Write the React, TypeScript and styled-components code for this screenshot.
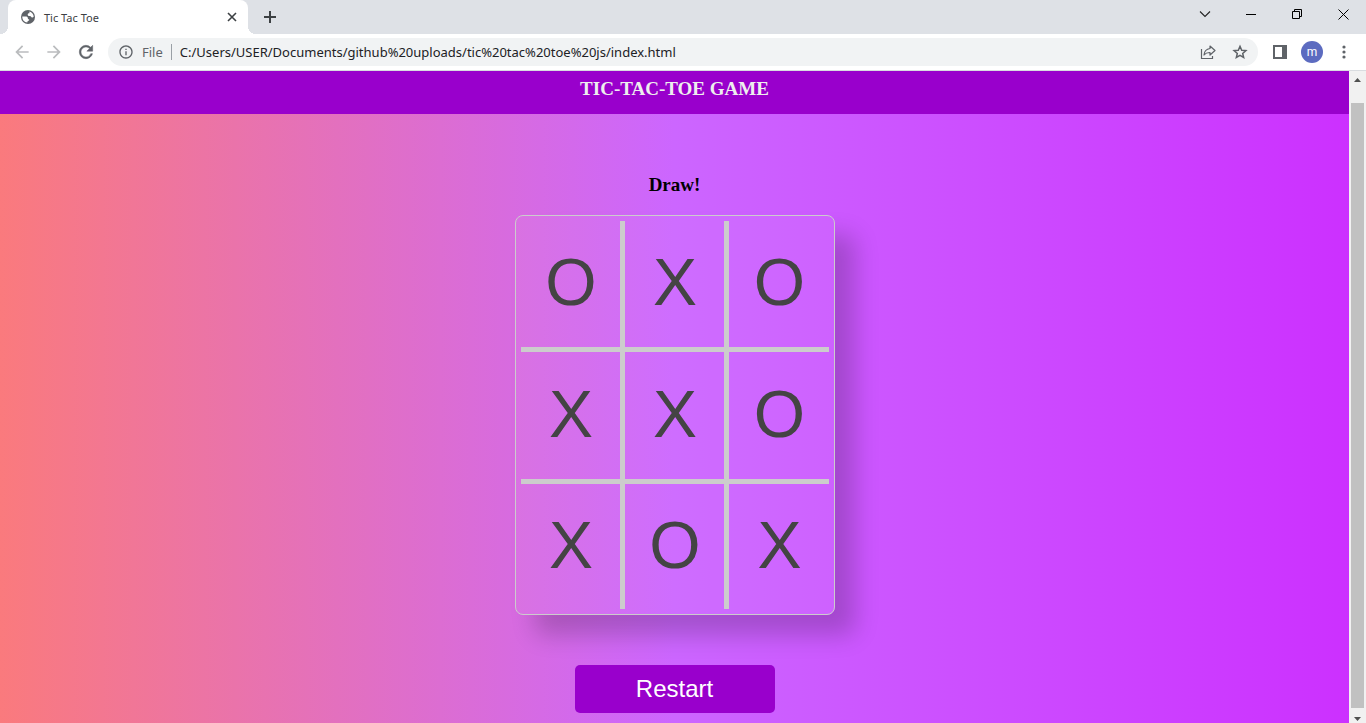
import React from "react";
import styled, { createGlobalStyle } from "styled-components";
import { MdArrowBack, MdArrowForward, MdInfoOutline } from "react-icons/md";

const GlobalStyle = createGlobalStyle`
  * { box-sizing: border-box; }
  body { margin: 0; overflow: hidden; }
  button { border: 0; padding: 0; margin: 0; background: none; color: inherit; }
`;

const sans = `"Noto Sans", "Open Sans", sans-serif`;

const Browser = styled.div`
  display: flex;
  flex-direction: column;
  height: 100vh;
  font-family: ${sans};
`;

const TabStrip = styled.header`
  display: flex;
  align-items: flex-end;
  height: 34px;
  flex: none;
  padding-left: 8px;
  background: #dee1e6;
`;

const Tab = styled.div`
  position: relative;
  display: flex;
  align-items: center;
  gap: 8px;
  width: 240px;
  height: 34px;
  padding: 0 8px 0 12px;
  border-radius: 8px 8px 0 0;
  background: #fff;
  color: #3c4043;
  font-size: 11px;

  &::before,
  &::after {
    content: "";
    position: absolute;
    bottom: 0;
    width: 8px;
    height: 8px;
  }
  &::before {
    left: -8px;
    background: radial-gradient(circle at 0 0, #dee1e6 8px, #fff 8px);
  }
  &::after {
    right: -8px;
    background: radial-gradient(circle at 100% 0, #dee1e6 8px, #fff 8px);
  }
`;

const TabTitle = styled.span`
  flex: 1;
`;

const IconButton = styled.button<{ $w: number; $color?: string }>`
  display: flex;
  align-items: center;
  justify-content: center;
  flex: none;
  width: ${(p) => p.$w}px;
  height: 28px;
  color: ${(p) => p.$color ?? "#5f6368"};
`;

const TabButton = styled(IconButton)`
  height: 34px;
`;

const WindowControls = styled.div`
  display: flex;
  align-self: flex-start;
  margin-left: auto;
`;

const Toolbar = styled.nav`
  display: flex;
  align-items: center;
  flex: none;
  height: 37px;
  padding: 0 6px;
  border-bottom: 1px solid #d9dce0;
  background: #fff;
`;

const AddressBar = styled.form`
  display: flex;
  align-items: center;
  flex: 1;
  height: 28px;
  margin: 0 6px;
  padding: 0 2px 0 10px;
  border-radius: 14px;
  background: #f1f3f4;
  color: #5f6368;
  font-size: 13px;
`;

const Scheme = styled.label`
  margin: 0 8px;
`;

const Divider = styled.span`
  width: 1px;
  height: 16px;
  background: #9aa0a6;
`;

const Url = styled.input`
  flex: 1;
  min-width: 0;
  padding: 0 8px;
  border: 0;
  outline: 0;
  background: none;
  color: #202124;
  font-family: ${sans};
  font-size: 13px;
`;

const Avatar = styled.button`
  width: 22px;
  height: 22px;
  flex: none;
  margin: 0 5px;
  border-radius: 50%;
  background: #5c6bc0;
  color: #fff;
  font: 12px/20px Roboto, sans-serif;
`;

const Viewport = styled.div`
  display: flex;
  flex: 1;
  min-height: 0;
`;

const Page = styled.div`
  display: flex;
  flex-direction: column;
  flex: 1;
  overflow: hidden;
  font-family: "Liberation Serif", serif;
`;

const Banner = styled.header`
  flex: none;
  height: 43px;
  background: #9900cc;
  color: #eee;
  text-align: center;
`;

const Title = styled.h1`
  margin: 0;
  font-size: 19px;
  line-height: 36px;
`;

const Game = styled.main`
  display: flex;
  flex-direction: column;
  align-items: center;
  flex: 1;
  padding-top: 60px;
  background: linear-gradient(to right, #fa7a7d, #cc66ff 50%, #cc30ff);
`;

const Status = styled.h2`
  margin: 0 0 19px;
  font-size: 19px;
  line-height: 22px;
`;

const Board = styled.section`
  display: grid;
  flex: none;
  grid-template: 131px 132px 1fr / 104px 104px 1fr;
  width: 320px;
  height: 400px;
  padding: 5px;
  border: 1px solid #ccc;
  border-radius: 8px;
  background: rgba(255, 255, 255, 0.05);
  box-shadow: 20px 20px 24px rgba(0, 0, 0, 0.2);
`;

const Cell = styled.button`
  padding: 0 0 4px 2px;
  border: 0 solid #ccc;
  color: #444;
  font: 66px/74px "Liberation Sans", Arial, sans-serif;

  &:not(:nth-child(3n)) { border-right-width: 5px; }
  &:nth-child(-n + 6) { border-bottom-width: 5px; }
`;

const Restart = styled.button`
  flex: none;
  width: 200px;
  height: 48px;
  margin-top: 50px;
  border-radius: 5px;
  background: #9900cc;
  color: #fff;
  font: 24px/28px "Liberation Sans", Arial, sans-serif;
`;

const ScrollBar = styled.div`
  display: flex;
  flex-direction: column;
  flex: none;
  width: 17px;
  background: #f1f1f1;
`;

const ScrollArrow = styled.button<{ $h: number; $top?: number }>`
  display: flex;
  align-items: center;
  justify-content: center;
  flex: none;
  height: ${(p) => p.$h}px;
  padding-top: ${(p) => p.$top ?? 0}px;
`;

const Thumb = styled.div`
  flex: 1;
  margin: 15px 2px 0;
  background: #c1c1c1;
`;

const marks = ["O", "X", "O", "X", "X", "O", "X", "O", "X"];

export default function App() {
  return (
    <Browser>
      <GlobalStyle />
      <TabStrip>
        <Tab>
          <svg width="16" height="16" viewBox="0 0 16 16" aria-hidden="true">
            <circle cx="8" cy="8" r="7" fill="#5f6368" />
            <path d="M2.3 7.600h3.200c1.500 0 2.400.600 2.400 1.800 0 .600.500.800 1.200.800v1.300c-1.200.200-1.800.900-1.800 2.100C4.200 13.300 2.200 11 2.300 7.600z" fill="#fff" />
            <path d="M9.400 2.500c2.500.700 4.200 2.700 4.300 5.200-.800.900-1.700.900-2.400.200-.300-.500-.800-.800-1.600-.800-1.200 0-2-.600-2-1.600s.700-1.300 1.700-1.300z" fill="#fff" />
          </svg>
          <TabTitle>Tic Tac Toe</TabTitle>
          <IconButton $w={16} $color="#3c4043" aria-label="Close tab">
            <svg width="10" height="10" viewBox="0 0 10 10" stroke="currentColor" strokeWidth="1.6">
              <path d="M1 1l8 8M9 1L1 9" />
            </svg>
          </IconButton>
        </Tab>
        <TabButton $w={44} $color="#3c4043" aria-label="New tab">
          <svg width="12" height="12" viewBox="0 0 12 12" stroke="currentColor" strokeWidth="2">
            <path d="M6 0v12M0 6h12" />
          </svg>
        </TabButton>
        <WindowControls>
          <IconButton $w={46} $color="#222" aria-label="Search tabs">
            <svg width="12" height="8" viewBox="0 0 12 8" fill="none" stroke="currentColor" strokeWidth="1.1">
              <path d="M1 1.500l5 5 5-5" />
            </svg>
          </IconButton>
          <IconButton $w={46} $color="#000" aria-label="Minimize">
            <svg width="10" height="10" viewBox="0 0 10 10"><path d="M0 5h10v1H0z" /></svg>
          </IconButton>
          <IconButton $w={46} $color="#000" aria-label="Restore">
            <svg width="10" height="10" viewBox="0 0 10 10" fill="none" stroke="currentColor">
              <path d="M.5 2.500h7v7h-7zM2.500 2.500v-2h7v7h-2" />
            </svg>
          </IconButton>
          <IconButton $w={46} $color="#000" aria-label="Close">
            <svg width="11" height="11" viewBox="0 0 11 11" stroke="currentColor">
              <path d="M.5.5l10 10M10.500.5l-10 10" />
            </svg>
          </IconButton>
        </WindowControls>
      </TabStrip>
      <Toolbar>
        <IconButton $w={32} $color="#babcbe" aria-label="Back"><MdArrowBack size={20} /></IconButton>
        <IconButton $w={32} $color="#babcbe" aria-label="Forward"><MdArrowForward size={20} /></IconButton>
        <IconButton $w={32} aria-label="Reload">
          <svg width="20" height="20" viewBox="0 0 24 24" fill="currentColor" stroke="currentColor" strokeWidth="0.600">
            <path d="M17.650 6.350A7.958 7.958 0 0 0 12 4c-4.420 0-7.990 3.580-7.990 8s3.570 8 7.990 8c3.730 0 6.840-2.550 7.730-6h-2.080A5.990 5.990 0 0 1 12 18c-3.310 0-6-2.690-6-6s2.690-6 6-6c1.660 0 3.140.690 4.220 1.780L13 11h7V4l-2.350 2.350z" />
          </svg>
        </IconButton>
        <AddressBar>
          <MdInfoOutline size={16} />
          <Scheme htmlFor="url">File</Scheme>
          <Divider />
          <Url id="url" defaultValue="C:/Users/USER/Documents/github%20uploads/tic%20tac%20toe%20js/index.html" />
          <IconButton $w={32} type="button" aria-label="Share">
            <svg width="16" height="16" viewBox="0 0 16 16" fill="none" stroke="currentColor" strokeWidth="1.200">
              <path d="M1.500 5v9.500h11V12" />
              <path d="M10 2l5 4.500-5 4.500V8.500C7.200 8.400 5.300 9.300 4 11c.3-3.500 2.300-6 6-6.500z" strokeLinejoin="round" />
            </svg>
          </IconButton>
          <IconButton $w={32} type="button" aria-label="Bookmark">
            <svg width="16" height="16" viewBox="0 0 16 16" fill="none" stroke="currentColor" strokeWidth="1.500">
              <path d="M8 2.300l1.700 3.900 4.200.400-3.200 2.800.950 4.100L8 11.300l-3.650 2.200.950-4.100L2.100 6.600l4.200-.400z" />
            </svg>
          </IconButton>
        </AddressBar>
        <IconButton $w={32} aria-label="Side panel">
          <svg width="14" height="14" viewBox="0 0 14 14">
            <path fillRule="evenodd" fill="currentColor" d="M0 0h14v14H0zM2 2v10h7V2z" />
          </svg>
        </IconButton>
        <Avatar aria-label="Profile">m</Avatar>
        <IconButton $w={32} aria-label="Menu">
          <svg width="4" height="14" viewBox="0 0 4 14" fill="currentColor">
            <circle cx="2" cy="2" r="1.600" /><circle cx="2" cy="7" r="1.600" /><circle cx="2" cy="12" r="1.600" />
          </svg>
        </IconButton>
      </Toolbar>
      <Viewport>
        <Page>
          <Banner><Title>TIC-TAC-TOE GAME</Title></Banner>
          <Game>
            <Status>Draw!</Status>
            <Board>
              {marks.map((mark, i) => <Cell key={i}>{mark}</Cell>)}
            </Board>
            <Restart>Restart</Restart>
          </Game>
        </Page>
        <ScrollBar>
          <ScrollArrow $h={17} aria-label="Scroll up">
            <svg width="7" height="4" viewBox="0 0 7 4"><path d="M0 4l3.500-4L7 4z" fill="#505050" /></svg>
          </ScrollArrow>
          <Thumb />
          <ScrollArrow $h={15} $top={6} aria-label="Scroll down">
            <svg width="7" height="4" viewBox="0 0 7 4"><path d="M0 0l3.500 4L7 0z" fill="#505050" /></svg>
          </ScrollArrow>
        </ScrollBar>
      </Viewport>
    </Browser>
  );
}
